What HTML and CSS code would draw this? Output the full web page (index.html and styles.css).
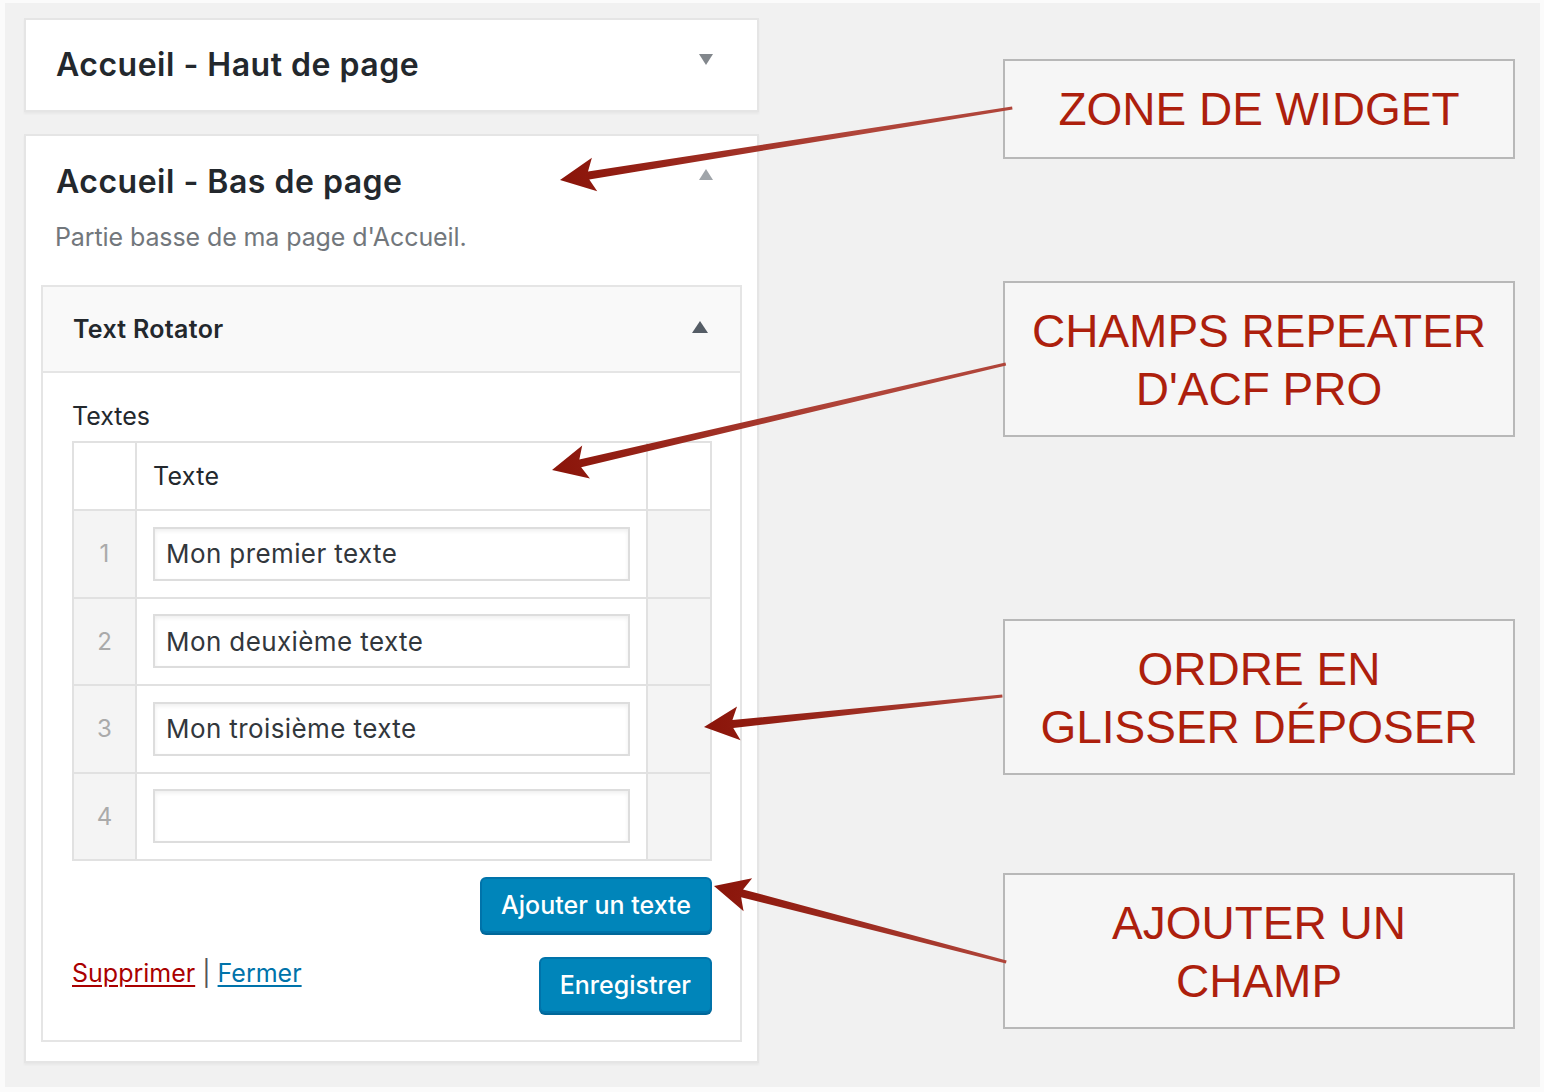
FILE: index.html
```html
<!DOCTYPE html>
<html lang="fr">
<head>
    <meta charset="UTF-8">
    <meta name="viewport" content="width=device-width, initial-scale=1.0">
    <title>Widgets - Text Rotator</title>
    <link rel="stylesheet" href="styles.css">
</head>
<body>
<div class="frame">
    <div class="sidebars">
        <div class="sidebar closed">
            <h2>Accueil - Haut de page</h2>
            <span class="toggle down"></span>
        </div>

        <div class="sidebar">
            <div class="sidebar-head">
                <h2>Accueil - Bas de page</h2>
                <span class="toggle up"></span>
            </div>
            <p class="description">Partie basse de ma page d'Accueil.</p>

            <div class="widget">
                <div class="widget-top">
                    <h3>Text Rotator</h3>
                    <span class="toggle up dark"></span>
                </div>
                <div class="widget-inside">
                    <label class="field-label">Textes</label>
                    <table class="repeater">
                        <thead>
                            <tr>
                                <th class="order"></th>
                                <th>Texte</th>
                                <th class="remove"></th>
                            </tr>
                        </thead>
                        <tbody>
                            <tr>
                                <td class="order">1</td>
                                <td><input type="text" value="Mon premier texte"></td>
                                <td class="remove"></td>
                            </tr>
                            <tr>
                                <td class="order">2</td>
                                <td><input type="text" value="Mon deuxième texte"></td>
                                <td class="remove"></td>
                            </tr>
                            <tr>
                                <td class="order">3</td>
                                <td><input type="text" value="Mon troisième texte"></td>
                                <td class="remove"></td>
                            </tr>
                            <tr>
                                <td class="order">4</td>
                                <td><input type="text" value=""></td>
                                <td class="remove"></td>
                            </tr>
                        </tbody>
                    </table>
                    <div class="add-row">
                        <button class="button-primary">Ajouter un texte</button>
                    </div>
                    <div class="widget-actions">
                        <div class="links">
                            <a href="#" class="delete">Supprimer</a> <span class="sep">|</span> <a href="#" class="close">Fermer</a>
                        </div>
                        <button class="button-primary">Enregistrer</button>
                    </div>
                </div>
            </div>
        </div>
    </div>

    <div class="notes">
        <div class="note note-zone">ZONE DE WIDGET</div>
        <div class="note note-repeater">CHAMPS REPEATER<br>D'ACF PRO</div>
        <div class="note note-order">ORDRE EN<br>GLISSER DÉPOSER</div>
        <div class="note note-add">AJOUTER UN<br>CHAMP</div>
    </div>
</div>

<!-- flèches d'annotation -->
<svg class="arrows" width="1544" height="1092" viewBox="0 0 1544 1092">
    <defs>
        <linearGradient id="arrowFill" x1="0" y1="0" x2="300" y2="0" gradientUnits="userSpaceOnUse">
            <stop offset="0" stop-color="#8a1409"/>
            <stop offset="1" stop-color="#b0453a"/>
        </linearGradient>
    </defs>
    <g transform="translate(560 180) rotate(-9.05)">
        <path d="M0 0 L35 -17 L29 -4 L458 -1.5 L458 1.5 L29 4 L35 17 Z" fill="url(#arrowFill)"/>
    </g>
    <g transform="translate(552 470) rotate(-13.14)">
        <path d="M0 0 L35 -17 L29 -4 L466 -1.5 L466 1.5 L29 4 L35 17 Z" fill="url(#arrowFill)"/>
    </g>
    <g transform="translate(704 727) rotate(-5.94)">
        <path d="M0 0 L35 -17 L29 -4 L300 -1.5 L300 1.5 L29 4 L35 17 Z" fill="url(#arrowFill)"/>
    </g>
    <g transform="translate(714 886) rotate(14.59)">
        <path d="M0 0 L35 -17 L29 -4 L302 -1.5 L302 1.5 L29 4 L35 17 Z" fill="url(#arrowFill)"/>
    </g>
</svg>
</body>
</html>
```

FILE: styles.css
```css
body {
    margin: 0;
    background-color: #fbfbfb;
    font-family: Inter, "Noto Sans", sans-serif;
    color: #23282d;
}
.frame {
    position: relative;
    margin: 3px 4px 5px 5px;
    height: 1084px;
    background-color: #f1f1f1;
    display: flex;
}
.sidebars {
    width: 735px;
    margin-left: 19px;
    padding-top: 15px;
}
.sidebar {
    position: relative;
    background-color: #fff;
    border: 2px solid #e5e5e5;
    box-shadow: 0 2px 2px rgba(0,0,0,0.04);
    box-sizing: border-box;
    margin-bottom: 22px;
    padding: 0 15px 19px 15px;
}
.sidebar.closed {
    height: 94px;
    padding: 0 0 0 30px;
    display: flex;
    align-items: center;
}
.sidebar h2 {
    margin: 0;
    font-size: 32px;
    font-weight: 600;
    line-height: 40px;
    letter-spacing: 0.5px;
}
.sidebar-head {
    padding: 26px 0 0 15px;
}
.toggle {
    position: absolute;
    width: 0;
    height: 0;
    border-left: 7px solid transparent;
    border-right: 7px solid transparent;
}
.toggle.down {
    right: 44px;
    top: 34px;
    border-top: 11px solid #82878c;
}
.toggle.up {
    right: 44px;
    top: 33px;
    border-bottom: 11px solid #a0a5aa;
}
.toggle.up.dark {
    right: 32px;
    top: 34px;
    border-left-width: 8px;
    border-right-width: 8px;
    border-bottom: 12px solid #555d66;
}
.description {
    margin: 19px 0 0 14px;
    font-size: 25px;
    line-height: 32px;
    letter-spacing: -0.1px;
    color: #72777c;
}
.widget {
    margin-top: 32px;
    border: 2px solid #e5e5e5;
    background-color: #fff;
}
.widget-top {
    position: relative;
    height: 84px;
    background-color: #f9f9f9;
    border-bottom: 2px solid #e5e5e5;
    display: flex;
    align-items: center;
    padding-left: 30px;
}
.widget-top h3 {
    margin: 0;
    font-size: 25px;
    font-weight: 600;
    letter-spacing: 0.3px;
}
.widget-inside {
    padding: 28px 30px 27px 29px;
}
.field-label {
    display: block;
    font-size: 25px;
    line-height: 30px;
    margin-bottom: 10px;
}
.repeater {
    width: 640px;
    border-collapse: collapse;
    border: 2px solid #e1e1e1;
}
.repeater th,
.repeater td {
    border: 2px solid #e1e1e1;
    padding: 0;
}
.repeater th {
    height: 66px;
    text-align: left;
    font-weight: 400;
    font-size: 25px;
    letter-spacing: 0.3px;
    padding-left: 16px;
    background-color: #fff;
}
.repeater th.order,
.repeater th.remove {
    padding: 0;
}
.repeater .order {
    width: 61px;
    text-align: center;
    color: #aaa;
    font-size: 24px;
    background-color: #f4f4f4;
}
.repeater .remove {
    width: 62px;
    background-color: #f4f4f4;
}
.repeater thead .order,
.repeater thead .remove {
    background-color: #fff;
}
.repeater td {
    height: 85.5px;
    padding: 0 16px;
}
.repeater td.order,
.repeater td.remove {
    padding: 0;
}
.repeater input {
    width: 100%;
    height: 54px;
    box-sizing: border-box;
    border: 2px solid #ddd;
    box-shadow: inset 0 2px 4px rgba(0,0,0,0.07);
    padding: 0 11px;
    font-family: Inter, "Noto Sans", sans-serif;
    font-size: 26px;
    letter-spacing: 0.4px;
    color: #32373c;
    display: block;
}
.add-row {
    display: flex;
    justify-content: flex-end;
    margin: 16px -2px 0 0;
}
.button-primary {
    height: 56px;
    padding: 0 19px;
    background-color: #0085ba;
    border: 2px solid #0073aa;
    border-radius: 6px;
    box-shadow: 0 2px 0 #006799;
    color: #fff;
    font-family: Inter, "Noto Sans", sans-serif;
    font-size: 25px;
    font-weight: 500;
    cursor: pointer;
}
.widget-actions {
    display: flex;
    justify-content: space-between;
    align-items: flex-start;
    margin: 24px -2px 0 0;
}
.links {
    font-size: 25px;
    line-height: 32px;
    color: #23282d;
}
.links a {
    text-decoration: underline;
    text-underline-offset: 3px;
}
.links .sep {
    color: #555;
}
.links .delete {
    color: #a00;
}
.links .close {
    color: #0073aa;
}
.notes {
    margin-left: 244px;
    width: 512px;
    display: flex;
    flex-direction: column;
}
.note {
    box-sizing: border-box;
    background-color: #f6f6f6;
    border: 2px solid #b8b8b8;
    font-family: "Liberation Sans", Arial, sans-serif;
    font-size: 46px;
    line-height: 58px;
    color: #ad1f0d;
    text-align: center;
    padding: 19px 0;
}
.note-zone {
    margin-top: 56px;
    height: 100px;
    padding: 19px 0;
}
.note-repeater {
    margin-top: 122px;
    height: 156px;
}
.note-order {
    margin-top: 182px;
    height: 156px;
}
.note-add {
    margin-top: 98px;
    height: 156px;
}
.arrows {
    position: absolute;
    top: 0;
    left: 0;
    pointer-events: none;
}
```
